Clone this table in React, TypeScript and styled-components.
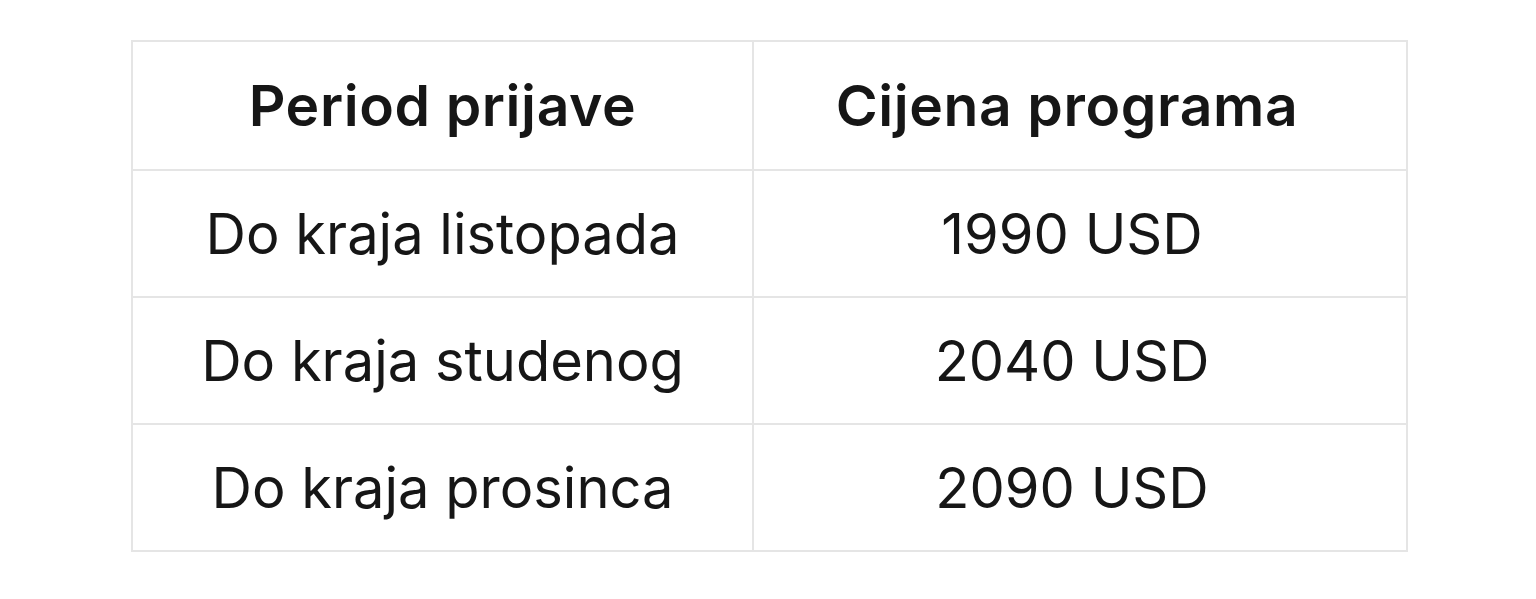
import styled, { createGlobalStyle } from "styled-components";

const GlobalStyle = createGlobalStyle`
  body {
    margin: 0;
    background: #ffffff;
    font-family: Inter, "Noto Sans", "Liberation Sans", sans-serif;
    color: #161616;
  }
`;

const Page = styled.div`
  padding: 40px 0 0 131px;
`;

const PriceTable = styled.table`
  width: 1275px;
  border-collapse: collapse;
  border: 2px solid #e5e5e5;
  table-layout: fixed;
`;

const HeadRow = styled.tr`
  height: 129px;
`;

const BodyRow = styled.tr`
  height: 127px;
`;

interface ICell {
  wide?: boolean;
}

const HeadCell = styled.th<ICell>`
  width: ${(props) => (props.wide ? "626px" : "619px")};
  border: 2px solid #e5e5e5;
  padding: 0 ${(props) => (props.wide ? "26px" : "0")} 0 0;
  font-size: 57px;
  font-weight: 600;
  letter-spacing: 0.6px;
  text-align: center;
  vertical-align: middle;
`;

const Cell = styled.td<ICell>`
  border: 2px solid #e5e5e5;
  padding: 0 ${(props) => (props.wide ? "16px" : "0")} 0 0;
  font-size: 56px;
  font-weight: 400;
  text-align: center;
  vertical-align: middle;
`;

const rows = [
  { period: "Do kraja listopada", price: "1990 USD" },
  { period: "Do kraja studenog", price: "2040 USD" },
  { period: "Do kraja prosinca", price: "2090 USD" },
];

function App() {
  return (
    <>
      <GlobalStyle />
      <Page>
        <PriceTable>
          <thead>
            <HeadRow>
              <HeadCell>Period prijave</HeadCell>
              <HeadCell wide>Cijena programa</HeadCell>
            </HeadRow>
          </thead>
          <tbody>
            {rows.map((row) => (
              <BodyRow key={row.period}>
                <Cell>{row.period}</Cell>
                <Cell wide>{row.price}</Cell>
              </BodyRow>
            ))}
          </tbody>
        </PriceTable>
      </Page>
    </>
  );
}

export default App;
